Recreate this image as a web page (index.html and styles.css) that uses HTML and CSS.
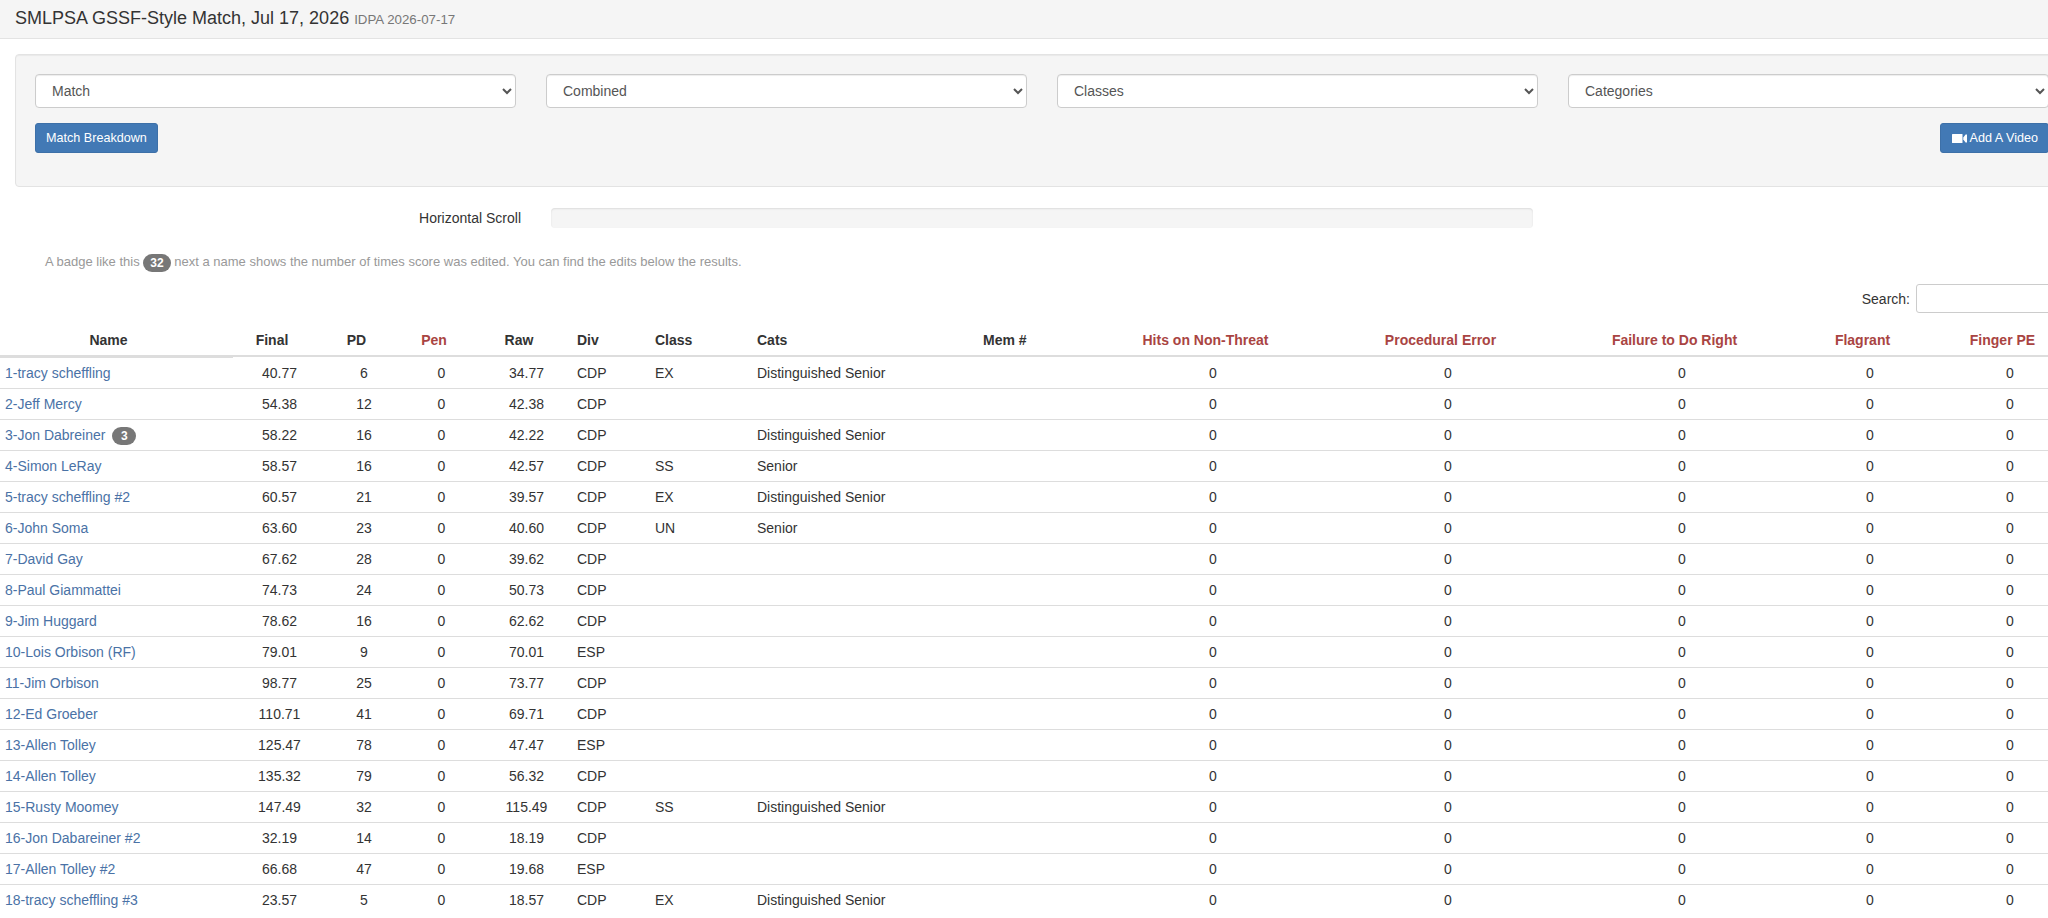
FILE: index.html
```html
<!DOCTYPE html>
<html lang="en">
<head>
<meta charset="utf-8">
<title>SMLPSA GSSF-Style Match</title>
<link rel="stylesheet" href="styles.css">
</head>
<body>
<header class="page-head">
  <h1 class="title">SMLPSA GSSF-Style Match, Jul 17, 2026 <small class="subtitle">IDPA 2026-07-17</small></h1>
</header>
<section class="well">
  <div class="filters">
    <select class="field"><option>Match</option></select>
    <select class="field"><option>Combined</option></select>
    <select class="field"><option>Classes</option></select>
    <select class="field"><option>Categories</option></select>
  </div>
  <div class="actions">
    <button class="btn" type="button">Match Breakdown</button>
    <button class="btn btn-video" type="button"><svg class="icon" viewBox="0 0 15 9" width="15" height="9" aria-hidden="true"><rect x="0" y="0" width="10.5" height="9" rx="0.5"/><path d="M11.3 3.6 13.6 0.6h1.4v7.8h-1.4L11.3 5.4z"/></svg> Add A Video</button>
  </div>
</section>
<div class="scroll-row">
  <span class="scroll-label">Horizontal Scroll</span>
  <div class="scroll-bar"></div>
</div>
<p class="note">A badge like this <span class="badge">32</span> next a name shows the number of times score was edited. You can find the edits below the results.</p>
<div class="results">
  <label class="search">Search: <input class="search-input" type="search"></label>
  <table class="grid">
    <colgroup>
      <col class="c-name"><col class="c-final"><col class="c-pd"><col class="c-pen"><col class="c-raw"><col class="c-div"><col class="c-class"><col class="c-cats"><col class="c-mem"><col class="c-hits"><col class="c-proc"><col class="c-fail"><col class="c-flag"><col class="c-finger">
    </colgroup>
    <thead>
      <tr>
        <th class="first">Name</th><th>Final</th><th>PD</th><th class="danger">Pen</th><th>Raw</th><th class="left">Div</th><th class="left">Class</th><th class="left">Cats</th><th class="left">Mem #</th><th class="danger">Hits on Non-Threat</th><th class="danger">Procedural Error</th><th class="danger">Failure to Do Right</th><th class="danger">Flagrant</th><th class="danger">Finger PE</th>
      </tr>
    </thead>
    <tbody>
      <tr><td class="left"><a href="#">1-tracy scheffling</a></td><td>40.77</td><td>6</td><td>0</td><td>34.77</td><td class="left">CDP</td><td class="left">EX</td><td class="left">Distinguished Senior</td><td></td><td>0</td><td>0</td><td>0</td><td>0</td><td>0</td></tr>
      <tr><td class="left"><a href="#">2-Jeff Mercy</a></td><td>54.38</td><td>12</td><td>0</td><td>42.38</td><td class="left">CDP</td><td class="left"></td><td class="left"></td><td></td><td>0</td><td>0</td><td>0</td><td>0</td><td>0</td></tr>
      <tr><td class="left"><a href="#">3-Jon Dabreiner</a> <span class="badge row-badge">3</span></td><td>58.22</td><td>16</td><td>0</td><td>42.22</td><td class="left">CDP</td><td class="left"></td><td class="left">Distinguished Senior</td><td></td><td>0</td><td>0</td><td>0</td><td>0</td><td>0</td></tr>
      <tr><td class="left"><a href="#">4-Simon LeRay</a></td><td>58.57</td><td>16</td><td>0</td><td>42.57</td><td class="left">CDP</td><td class="left">SS</td><td class="left">Senior</td><td></td><td>0</td><td>0</td><td>0</td><td>0</td><td>0</td></tr>
      <tr><td class="left"><a href="#">5-tracy scheffling #2</a></td><td>60.57</td><td>21</td><td>0</td><td>39.57</td><td class="left">CDP</td><td class="left">EX</td><td class="left">Distinguished Senior</td><td></td><td>0</td><td>0</td><td>0</td><td>0</td><td>0</td></tr>
      <tr><td class="left"><a href="#">6-John Soma</a></td><td>63.60</td><td>23</td><td>0</td><td>40.60</td><td class="left">CDP</td><td class="left">UN</td><td class="left">Senior</td><td></td><td>0</td><td>0</td><td>0</td><td>0</td><td>0</td></tr>
      <tr><td class="left"><a href="#">7-David Gay</a></td><td>67.62</td><td>28</td><td>0</td><td>39.62</td><td class="left">CDP</td><td class="left"></td><td class="left"></td><td></td><td>0</td><td>0</td><td>0</td><td>0</td><td>0</td></tr>
      <tr><td class="left"><a href="#">8-Paul Giammattei</a></td><td>74.73</td><td>24</td><td>0</td><td>50.73</td><td class="left">CDP</td><td class="left"></td><td class="left"></td><td></td><td>0</td><td>0</td><td>0</td><td>0</td><td>0</td></tr>
      <tr><td class="left"><a href="#">9-Jim Huggard</a></td><td>78.62</td><td>16</td><td>0</td><td>62.62</td><td class="left">CDP</td><td class="left"></td><td class="left"></td><td></td><td>0</td><td>0</td><td>0</td><td>0</td><td>0</td></tr>
      <tr><td class="left"><a href="#">10-Lois Orbison (RF)</a></td><td>79.01</td><td>9</td><td>0</td><td>70.01</td><td class="left">ESP</td><td class="left"></td><td class="left"></td><td></td><td>0</td><td>0</td><td>0</td><td>0</td><td>0</td></tr>
      <tr><td class="left"><a href="#">11-Jim Orbison</a></td><td>98.77</td><td>25</td><td>0</td><td>73.77</td><td class="left">CDP</td><td class="left"></td><td class="left"></td><td></td><td>0</td><td>0</td><td>0</td><td>0</td><td>0</td></tr>
      <tr><td class="left"><a href="#">12-Ed Groeber</a></td><td>110.71</td><td>41</td><td>0</td><td>69.71</td><td class="left">CDP</td><td class="left"></td><td class="left"></td><td></td><td>0</td><td>0</td><td>0</td><td>0</td><td>0</td></tr>
      <tr><td class="left"><a href="#">13-Allen Tolley</a></td><td>125.47</td><td>78</td><td>0</td><td>47.47</td><td class="left">ESP</td><td class="left"></td><td class="left"></td><td></td><td>0</td><td>0</td><td>0</td><td>0</td><td>0</td></tr>
      <tr><td class="left"><a href="#">14-Allen Tolley</a></td><td>135.32</td><td>79</td><td>0</td><td>56.32</td><td class="left">CDP</td><td class="left"></td><td class="left"></td><td></td><td>0</td><td>0</td><td>0</td><td>0</td><td>0</td></tr>
      <tr><td class="left"><a href="#">15-Rusty Moomey</a></td><td>147.49</td><td>32</td><td>0</td><td>115.49</td><td class="left">CDP</td><td class="left">SS</td><td class="left">Distinguished Senior</td><td></td><td>0</td><td>0</td><td>0</td><td>0</td><td>0</td></tr>
      <tr><td class="left"><a href="#">16-Jon Dabareiner #2</a></td><td>32.19</td><td>14</td><td>0</td><td>18.19</td><td class="left">CDP</td><td class="left"></td><td class="left"></td><td></td><td>0</td><td>0</td><td>0</td><td>0</td><td>0</td></tr>
      <tr><td class="left"><a href="#">17-Allen Tolley #2</a></td><td>66.68</td><td>47</td><td>0</td><td>19.68</td><td class="left">ESP</td><td class="left"></td><td class="left"></td><td></td><td>0</td><td>0</td><td>0</td><td>0</td><td>0</td></tr>
      <tr><td class="left"><a href="#">18-tracy scheffling #3</a></td><td>23.57</td><td>5</td><td>0</td><td>18.57</td><td class="left">CDP</td><td class="left">EX</td><td class="left">Distinguished Senior</td><td></td><td>0</td><td>0</td><td>0</td><td>0</td><td>0</td></tr>
    </tbody>
  </table>
</div>
</body>
</html>
```
FILE: styles.css
```css
html {
  overflow: hidden;
}
body {
  margin: 0;
  width: 2082px;
  font-family: "Liberation Sans", Arial, sans-serif;
  font-size: 14px;
  line-height: 20px;
  color: #333;
  background: #fff;
}
.page-head {
  box-sizing: border-box;
  height: 39px;
  padding: 6px 15px 0;
  background: #f5f5f5;
  border-bottom: 1px solid #e3e3e3;
}
.title {
  margin: 0;
  font-size: 18px;
  font-weight: 400;
  line-height: 24px;
}
.subtitle {
  font-size: 13.3px;
  color: #777;
}
.well {
  box-sizing: border-box;
  width: 2054px;
  height: 133px;
  margin: 15px 0 0 15px;
  padding: 19px 0 33px 19px;
  background: #f5f5f5;
  border: 1px solid #e3e3e3;
  border-radius: 4px;
  box-shadow: inset 0 1px 1px rgba(0, 0, 0, .05);
}
.filters {
  display: grid;
  grid-template-columns: repeat(4, 481px);
  column-gap: 30px;
}
.field {
  box-sizing: border-box;
  width: 100%;
  height: 34px;
  padding: 6px 12px;
  font: 14px/20px "Liberation Sans", Arial, sans-serif;
  color: #555;
  background: #fff;
  border: 1px solid #ccc;
  border-radius: 4px;
  box-shadow: inset 0 1px 1px rgba(0, 0, 0, .075);
}
.actions {
  display: flex;
  justify-content: space-between;
  width: 2014px;
  margin-top: 15px;
}
.btn {
  box-sizing: border-box;
  height: 30px;
  padding: 5px 10px;
  font: 400 12.6px/18px "Liberation Sans", Arial, sans-serif;
  color: #fff;
  background: #4279b5;
  border: 1px solid #3d70a8;
  border-radius: 3px;
}
.btn-video {
  padding-left: 11px;
}
.icon {
  fill: #fff;
  vertical-align: -1px;
}
.scroll-row {
  display: flex;
  align-items: center;
  margin-top: 21px;
}
.scroll-label {
  width: 521px;
  margin-right: 30px;
  text-align: right;
}
.scroll-bar {
  width: 982px;
  height: 20px;
  background: #f5f5f5;
  border-radius: 4px;
  box-shadow: inset 0 1px 2px rgba(0, 0, 0, .1);
}
.note {
  height: 18px;
  margin: 25px 0 0;
  padding-left: 45px;
  font-size: 13px;
  line-height: 18px;
  color: #999;
}
.badge {
  display: inline-block;
  min-width: 10px;
  padding: 3px 7px;
  font-size: 12px;
  font-weight: 700;
  line-height: 12px;
  color: #fff;
  text-align: center;
  vertical-align: middle;
  background: #777;
  border-radius: 10px;
}
.row-badge {
  margin-left: 3px;
}
.search {
  display: flex;
  justify-content: flex-end;
  align-items: center;
  gap: 6px;
  margin-top: 13px;
}
.search-input {
  box-sizing: border-box;
  width: 166px;
  height: 29px;
  padding: 0 6px;
  background: #fff;
  border: 1px solid #ccc;
  border-radius: 3px;
}
.results {
  width: 2082px;
}
.grid {
  table-layout: fixed;
  width: 2082px;
  margin-top: 12px;
  border-collapse: separate;
  border-spacing: 0;
}
.c-name { width: 233px; }
.c-final { width: 93px; }
.c-pd { width: 76px; }
.c-pen { width: 79px; }
.c-raw { width: 91px; }
.c-div { width: 78px; }
.c-class { width: 102px; }
.c-cats { width: 226px; }
.c-mem { width: 114px; }
.c-hits { width: 242px; }
.c-proc { width: 228px; }
.c-fail { width: 240px; }
.c-flag { width: 136px; }
.c-finger { width: 144px; }
.grid th {
  height: 30px;
  box-sizing: border-box;
  padding: 5px 20px 5px 5px;
  font-weight: 700;
  text-align: center;
  white-space: nowrap;
  border-bottom: 2px solid #ddd;
}
.grid th.first {
  padding-right: 21px;
  box-shadow: 0 1px 0 #ddd;
}
.grid th.left {
  text-align: left;
}
.grid th.danger {
  color: #a94442;
}
.grid td {
  height: 20px;
  box-sizing: content-box;
  padding: 5px;
  text-align: center;
  white-space: nowrap;
  border-bottom: 1px solid #ddd;
}
.grid tbody tr:first-child td {
  padding-top: 6px;
}
.grid tbody tr:last-child td {
  border-bottom: 0;
}
.grid td.left {
  text-align: left;
}
.grid a {
  color: #4a72a6;
  text-decoration: none;
}
```
